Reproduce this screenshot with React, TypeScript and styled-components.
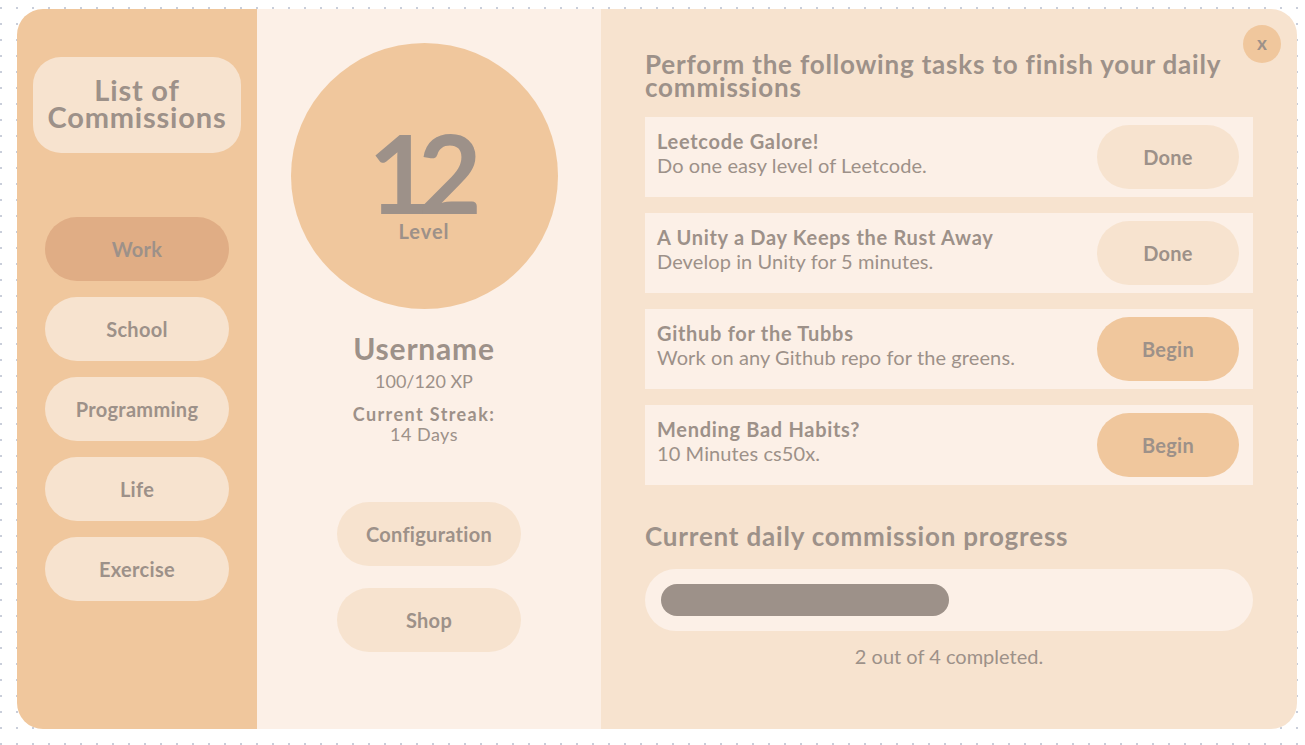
import React from "react";
import styled, { createGlobalStyle } from "styled-components";

const C = {
  sidebar: "#f0c79d",
  middle: "#fcf0e7",
  right: "#f7e3cf",
  active: "#e0ad85",
  text: "#9d9189",
};

const Global = createGlobalStyle`
  html, body { margin: 0; padding: 0; }
  body {
    width: 1305px;
    height: 745px;
    overflow: hidden;
    background-color: #ffffff;
    background-image: radial-gradient(circle, #c9ceda 0.9px, transparent 1.3px);
    background-size: 16px 16px;
    background-position: -7px 0px;
    font-family: "Lato", "Noto Sans", sans-serif;
    color: ${C.text};
  }
`;

const Page = styled.div`
  padding: 9px 0 0 17px;
`;

const Card = styled.div`
  position: relative;
  width: 1280px;
  height: 720px;
  border-radius: 26px;
  overflow: hidden;
  display: grid;
  grid-template-columns: 240px 344px 696px;
`;

const Sidebar = styled.aside`
  background: ${C.sidebar};
  display: flex;
  flex-direction: column;
  align-items: center;
  padding-top: 48px;
`;

const TitleCard = styled.div`
  width: 208px;
  height: 96px;
  border-radius: 28px;
  background: ${C.right};
  display: flex;
  align-items: center;
  justify-content: center;
  text-align: center;
  font-weight: 700;
  font-size: 29px;
  letter-spacing: 0.8px;
  line-height: 27px;
  margin-bottom: 64px;
  padding: 0 6px 4px 6px;
  box-sizing: border-box;
`;

const NavList = styled.nav`
  display: flex;
  flex-direction: column;
  gap: 16px;
`;

const Pill = styled.button<{ $bg: string; $w?: number }>`
  width: ${(p) => p.$w ?? 184}px;
  height: 64px;
  border-radius: 32px;
  border: none;
  background: ${(p) => p.$bg};
  color: ${C.text};
  font-family: inherit;
  font-weight: 700;
  font-size: 20px;
  letter-spacing: 0.3px;
  padding: 0;
  cursor: pointer;
`;

const Middle = styled.section`
  background: ${C.middle};
  display: flex;
  flex-direction: column;
  align-items: center;
  padding-top: 34px;
`;

const Profile = styled.div`
  display: flex;
  flex-direction: column;
  align-items: center;
  margin-right: 10px;
`;

const LevelCircle = styled.div`
  width: 267px;
  height: 266px;
  border-radius: 50%;
  background: ${C.sidebar};
  display: flex;
  flex-direction: column;
  align-items: center;
  padding-top: 74px;
  box-sizing: border-box;
`;

const LevelNum = styled.div`
  font-weight: 700;
  font-size: 110px;
  line-height: 108px;
  letter-spacing: -14px;
  margin-right: 12px;
`;

const LevelLabel = styled.div`
  font-weight: 700;
  font-size: 20px;
  letter-spacing: 1px;
  line-height: 22px;
  margin-top: -5px;
`;

const Username = styled.div`
  font-weight: 700;
  font-size: 30px;
  letter-spacing: 0.8px;
  line-height: 32px;
  margin-top: 23px;
`;

const Xp = styled.div`
  font-size: 18px;
  line-height: 22px;
  margin-top: 6px;
`;

const Streak = styled.div`
  display: flex;
  flex-direction: column;
  align-items: center;
  font-size: 18px;
  line-height: 20px;
  margin-top: 12px;
`;

const StreakLabel = styled.span`
  font-weight: 700;
  letter-spacing: 1.4px;
`;

const StreakValue = styled.span`
  letter-spacing: 0.5px;
`;

const MiddleButtons = styled.div`
  display: flex;
  flex-direction: column;
  gap: 22px;
  margin-top: 58px;
`;

const Right = styled.section`
  background: ${C.right};
  padding: 44px 44px 0 44px;
  display: flex;
  flex-direction: column;
`;

const Heading = styled.h2`
  margin: 0;
  font-weight: 700;
  font-size: 26px;
  letter-spacing: 0.8px;
  line-height: 23px;
  width: 600px;
`;

const TaskList = styled.div`
  display: flex;
  flex-direction: column;
  gap: 16px;
  margin-top: 18px;
`;

const TaskRow = styled.div`
  height: 80px;
  background: ${C.middle};
  display: flex;
  align-items: center;
  justify-content: space-between;
  padding: 0 14px 0 12px;
`;

const TaskText = styled.div`
  display: flex;
  flex-direction: column;
  font-size: 20px;
  line-height: 24px;
  margin-bottom: 9px;
`;

const TaskTitle = styled.div`
  font-weight: 700;
  letter-spacing: 0.7px;
`;

const TaskDesc = styled.div`
  letter-spacing: 0.1px;
`;

const ProgressHeading = styled(Heading)`
  margin-top: 38px;
  line-height: 26px;
`;

const Track = styled.div`
  margin-top: 20px;
  height: 62px;
  border-radius: 31px;
  background: ${C.middle};
  display: flex;
  align-items: center;
  padding: 0 16px;
`;

const Bar = styled.div`
  height: 32px;
  border-radius: 16px;
  background: ${C.text};
`;

const Caption = styled.div`
  text-align: center;
  font-size: 20px;
  line-height: 22px;
  margin-top: 14px;
`;

const Close = styled.button`
  position: absolute;
  top: 16px;
  right: 16px;
  width: 38px;
  height: 38px;
  border-radius: 50%;
  border: none;
  background: ${C.sidebar};
  color: ${C.text};
  font-family: inherit;
  font-weight: 700;
  font-size: 19px;
  line-height: 1;
  padding: 0 0 3px 0;
`;

const categories = ["Work", "School", "Programming", "Life", "Exercise"];

const tasks = [
  { title: "Leetcode Galore!", desc: "Do one easy level of Leetcode.", done: true },
  { title: "A Unity a Day Keeps the Rust Away", desc: "Develop in Unity for 5 minutes.", done: true },
  { title: "Github for the Tubbs", desc: "Work on any Github repo for the greens.", done: false },
  { title: "Mending Bad Habits?", desc: "10 Minutes cs50x.", done: false },
];

export default function App() {
  const completed = tasks.filter((t) => t.done).length;
  const pct = completed / tasks.length;
  return (
    <>
      <Global />
      <Page>
        <Card>
          <Sidebar>
            <TitleCard>List of Commissions</TitleCard>
            <NavList>
              {categories.map((c, i) => (
                <Pill key={c} $bg={i === 0 ? C.active : C.right}>
                  {c}
                </Pill>
              ))}
            </NavList>
          </Sidebar>
          <Middle>
            <Profile>
              <LevelCircle>
                <LevelNum>12</LevelNum>
                <LevelLabel>Level</LevelLabel>
              </LevelCircle>
              <Username>Username</Username>
              <Xp>100/120 XP</Xp>
              <Streak>
                <StreakLabel>Current Streak:</StreakLabel>
                <StreakValue>14 Days</StreakValue>
              </Streak>
            </Profile>
            <MiddleButtons>
              <Pill $bg={C.right}>Configuration</Pill>
              <Pill $bg={C.right}>Shop</Pill>
            </MiddleButtons>
          </Middle>
          <Right>
            <Heading>Perform the following tasks to finish your daily commissions</Heading>
            <TaskList>
              {tasks.map((t) => (
                <TaskRow key={t.title}>
                  <TaskText>
                    <TaskTitle>{t.title}</TaskTitle>
                    <TaskDesc>{t.desc}</TaskDesc>
                  </TaskText>
                  <Pill $w={142} $bg={t.done ? C.right : C.sidebar}>
                    {t.done ? "Done" : "Begin"}
                  </Pill>
                </TaskRow>
              ))}
            </TaskList>
            <ProgressHeading>Current daily commission progress</ProgressHeading>
            <Track>
              <Bar style={{ width: `${pct * 100}%` }} />
            </Track>
            <Caption>
              {completed} out of {tasks.length} completed.
            </Caption>
          </Right>
          <Close>x</Close>
        </Card>
      </Page>
    </>
  );
}
